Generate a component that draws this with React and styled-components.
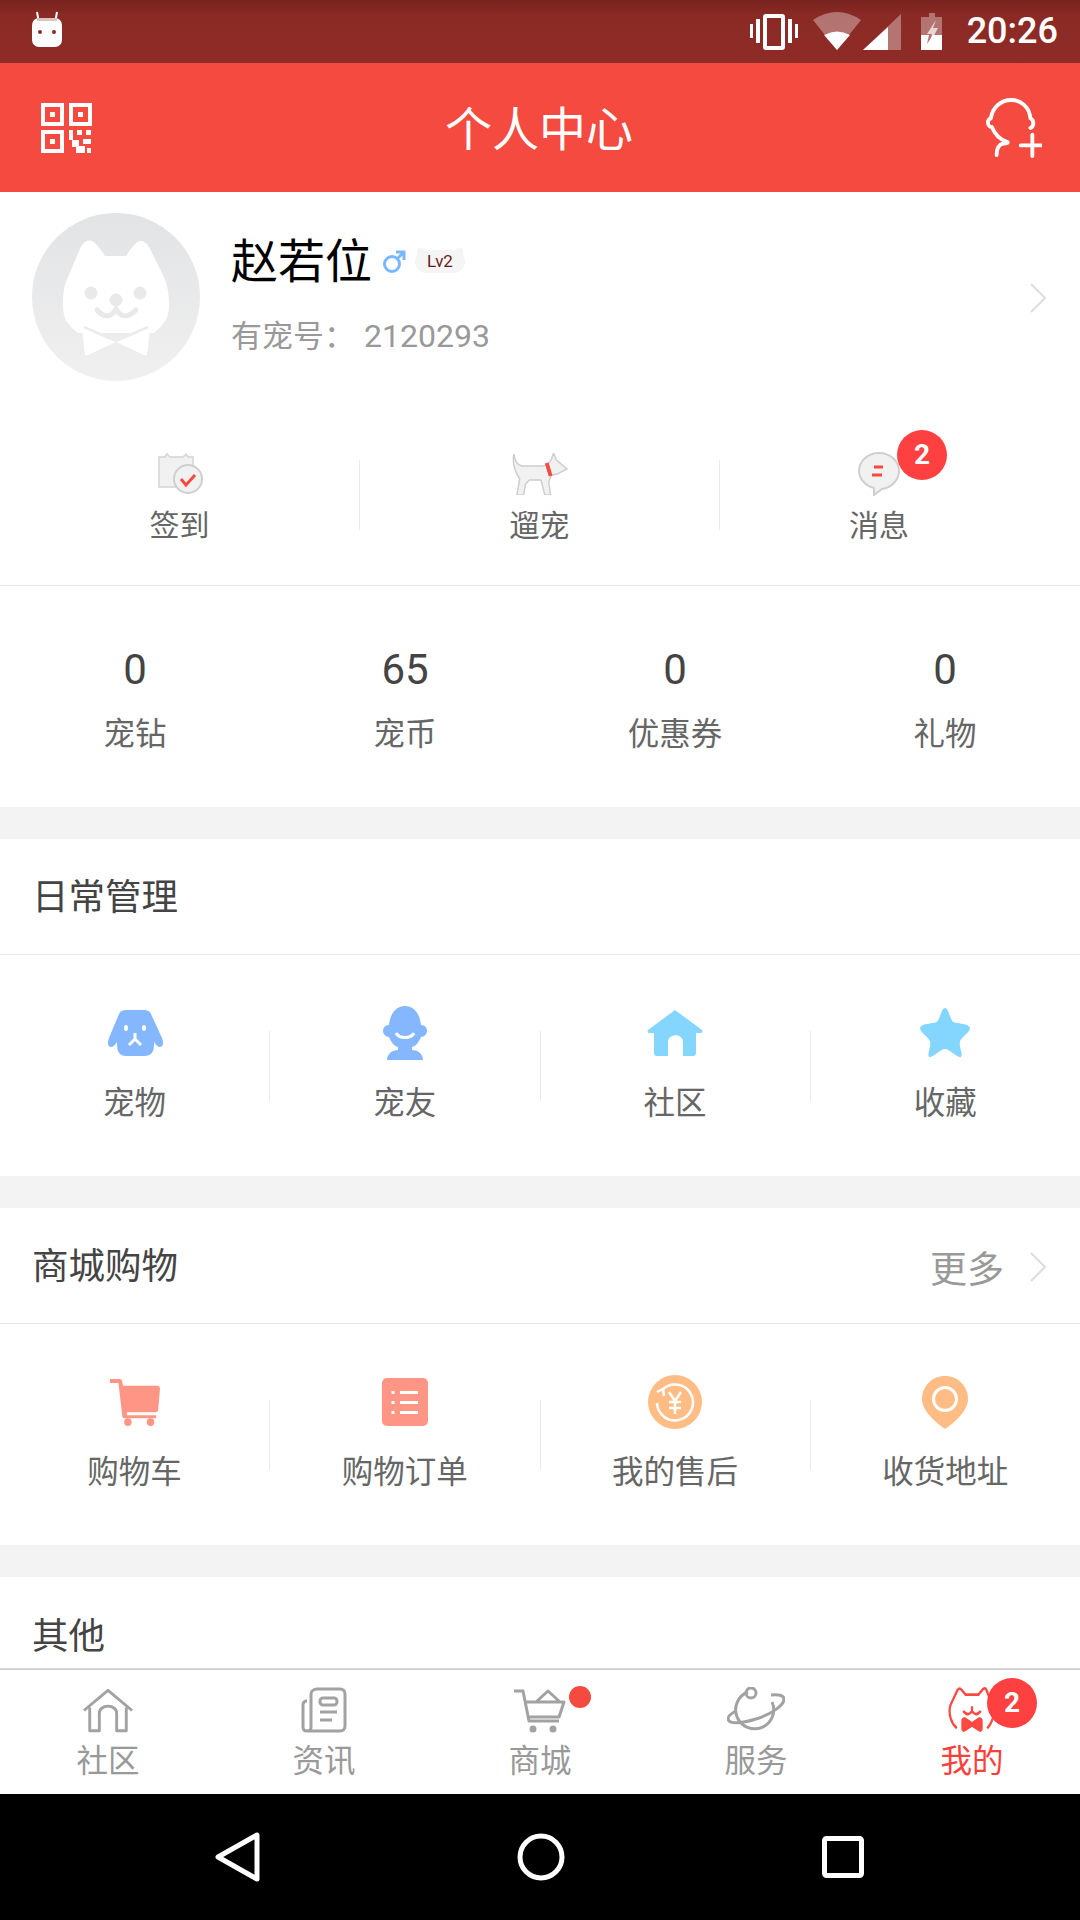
import React from "react";
import styled, { createGlobalStyle } from "styled-components";

const Global = createGlobalStyle`
  html, body { margin: 0; padding: 0; background: #fff; }
  body { font-family: Roboto, "Noto Sans CJK SC", sans-serif; }
  * { box-sizing: border-box; }
`;

const Page = styled.div`
  width: 1080px;
  height: 1920px;
  display: flex;
  flex-direction: column;
  overflow: hidden;
  background: #fff;
`;
const StatusBar = styled.div`
  height: 63px;
  flex: none;
  display: flex;
  align-items: center;
  justify-content: space-between;
  padding: 0 22px 0 30px;
  background: linear-gradient(#78231e 0, #8b2a25 16px, #8f2b27 100%);
`;
const RobotSlot = styled.div`
  display: flex;
  margin-bottom: 5px;
`;
const StatusRight = styled.div`
  display: flex;
  align-items: center;
`;
const Clock = styled.span`
  font-size: 36px;
  font-weight: 500;
  color: #fff;
  margin-left: 22px;
  line-height: 63px;
`;
const Header = styled.header`
  height: 129px;
  flex: none;
  display: flex;
  align-items: center;
  justify-content: space-between;
  background: #f44a40;
  padding: 0 38px 0 40px;
`;
const Title = styled.h1`
  margin: 0;
  padding-top: 3px;
  font-size: 47px;
  font-weight: 400;
  color: #fff;
  line-height: 1;
`;
const Content = styled.main`
  flex: 1;
  min-height: 0;
  overflow: hidden;
`;
const Profile = styled.section`
  height: 213px;
  display: flex;
  align-items: flex-start;
  padding: 21px 32px 0 32px;
`;
const Info = styled.div`
  flex: 1;
  margin-left: 31px;
  display: flex;
  flex-direction: column;
`;
const NameRow = styled.div`
  display: flex;
  align-items: center;
  height: 66px;
  margin-top: 16px;
`;
const Name = styled.span`
  font-size: 47px;
  color: #000;
  line-height: 66px;
  margin-right: 10px;
`;
const Level = styled.span`
  position: relative;
  width: 50px;
  height: 23px;
  margin-left: 9px;
  margin-bottom: 2px;
  border-radius: 12px;
  background: #f5f5f5;
  color: #6d1a1a;
  font-size: 17px;
  line-height: 23px;
  text-align: center;

  &::before,
  &::after {
    content: "";
    position: absolute;
    top: -2px;
    width: 10px;
    height: 10px;
    background: #f5f5f5;
    border-radius: 3px 6px 0 0;
  }
  &::before { left: 2px; }
  &::after { right: 2px; border-radius: 6px 3px 0 0; }
`;
const LevelText = styled.span`
  position: relative;
  z-index: 1;
`;
const PetId = styled.div`
  font-size: 32px;
  line-height: 42px;
  color: #999;
  margin-top: 20px;
`;
const PetIdLabel = styled.span`
  font-size: 31px;
  margin-right: 9px;
`;
const Chevron = styled.svg`
  flex: none;
  width: 20px;
  height: 32px;
`;
const ProfileChevron = styled(Chevron)`
  margin-top: 69px;
`;
const Row = styled.div`
  display: flex;
  align-items: center;
`;
const Actions = styled(Row)`
  height: 181px;
  border-bottom: 1px solid #e8e8e8;
  align-items: flex-start;
  padding-top: 45px;
`;
const Divider = styled.span`
  flex: none;
  width: 1px;
  height: ${(p) => p.$h || 70}px;
  background: #eaeaea;
  margin-top: ${(p) => p.$top || 0}px;
`;
const ActionCell = styled.div`
  flex: 0 0 ${(p) => p.$w}px;
  display: flex;
  flex-direction: column;
  align-items: center;
  padding-right: ${(p) => p.$shift || 0}px;
`;
const IconBox = styled.div`
  position: relative;
  height: ${(p) => p.$h || 48}px;
  display: flex;
  align-items: center;
  justify-content: center;
`;
const ActionLabel = styled.div`
  font-size: 30px;
  line-height: 42px;
  color: #666;
  margin-top: 7px;
`;
const CellLabel = styled.div`
  font-size: 31.5px;
  line-height: 42px;
  color: #666;
  margin-top: ${(p) => p.$gap || 0}px;
`;
const Badge = styled.span`
  position: absolute;
  width: 50px;
  height: 50px;
  border-radius: 50%;
  background: #ff4040;
  color: #fff;
  font-size: 28px;
  font-weight: 700;
  line-height: 50px;
  text-align: center;
  top: ${(p) => p.$top}px;
  left: ${(p) => p.$left}px;
`;
const Stats = styled(Row)`
  height: 221px;
  padding-top: 59px;
  align-items: flex-start;
`;
const Stat = styled.div`
  flex: 1;
  display: flex;
  flex-direction: column;
  align-items: center;
`;
const StatValue = styled.div`
  font-size: 42px;
  line-height: 50px;
  color: #444;
`;
const Gap = styled.div`
  height: 32px;
  background: #f3f3f3;
`;
const SectionHead = styled.div`
  height: 116px;
  border-bottom: 1px solid #e8e8e8;
  padding: 3px 32px 0 32px;
  display: flex;
  align-items: center;
  justify-content: space-between;
`;
const SectionTitle = styled.h2`
  margin: 0;
  font-size: 36.5px;
  font-weight: 400;
  color: #444;
  line-height: 1;
`;
const More = styled.div`
  display: flex;
  align-items: center;
  font-size: 37px;
  color: #999;
  gap: 24px;
`;
const Grid = styled.div`
  height: 221px;
  display: flex;
  align-items: flex-start;
  padding-top: 50px;
`;
const GridCell = styled.div`
  flex: 1;
  display: flex;
  flex-direction: column;
  align-items: center;
`;
const Clip = styled.div`
  height: 91px;
  padding: 42px 0 0 32px;
`;
const TabBar = styled.nav`
  height: 126px;
  flex: none;
  display: flex;
  border-top: 2px solid #d4d4d4;
  background: #fff;
`;
const Tab = styled.div`
  flex: 1;
  display: flex;
  flex-direction: column;
  align-items: center;
  padding-top: 16px;
`;
const TabIcon = styled.div`
  position: relative;
  width: 60px;
  height: 48px;
  display: flex;
  justify-content: center;
  align-items: center;
`;
const TabLabel = styled.div`
  font-size: 31.5px;
  line-height: 42px;
  margin-top: 7px;
  color: ${(p) => (p.$active ? "#fb3f3a" : "#999")};
`;
const Dot = styled.span`
  position: absolute;
  width: 22px;
  height: 22px;
  border-radius: 50%;
  background: #f44a40;
  left: 59px;
  top: 0;
`;
const NavBar = styled.div`
  height: 126px;
  flex: none;
  background: #000;
  display: flex;
  align-items: center;
  justify-content: center;
  padding-right: 3px;
  gap: 257px;
`;

const chevronProps = { viewBox: "0 0 20 32", fill: "none", stroke: "#dedede", strokeWidth: 2.2 };
const Arrow = () => (
  <Chevron {...chevronProps}>
    <path d="M3 2l14 14L3 30" />
  </Chevron>
);

const Robot = () => (
  <svg width="34" height="36" viewBox="0 0 34 36">
    <path d="M7 1l2 11M27 1l-2 11" stroke="#fff" strokeWidth="2" />
    <rect x="2" y="7" width="30" height="29" rx="7" fill="#fff" />
    <path d="M7 7h20v3H7z" fill="#d9c4c2" />
    <circle cx="10" cy="21" r="2" fill="#8c2a26" />
    <circle cx="24" cy="21" r="2" fill="#8c2a26" />
  </svg>
);
const StatusIcons = () => (
  <svg width="195" height="40" viewBox="0 0 195 40">
    <g fill="#fff">
      <path d="M0 12h3v14H0zM6 7h4v24H6zM38 7h4v24h-4zM45 12h3v14h-3z" />
      <path fillRule="evenodd" d="M16 2h16a3 3 0 0 1 3 3v30a3 3 0 0 1-3 3H16a3 3 0 0 1-3-3V5a3 3 0 0 1 3-3zm1 4v28h14V6z" />
      <path d="M63 8q24-16 48 0L87 38z" opacity=".35" />
      <path d="M74 23q13-7 26 0L87 38z" />
      <path d="M151 2v36h-38z" opacity=".35" />
      <path d="M138 15v23h-25z" />
      <path d="M171 5h8V1h6v4h7v33h-21z" opacity=".35" />
      <path d="M171 23h8l-2 9 6-9h9v15h-21z" />
      <path d="M186 8l-9 14h5l-2 9 8-15h-5z" opacity=".7" />
    </g>
  </svg>
);
const Qr = () => (
  <svg width="52" height="52" viewBox="0 0 52 52" fill="#fff">
    <path fillRule="evenodd" d="M1 1h23v23H1zm4 4v15h15V5zM29 1h23v23H29zm4 4v15h15V5zM1 28h23v23H1zm4 4v15h15V32z" />
    <path d="M10 10h5v5h-5zM38 10h5v5h-5zM10 37h5v5h-5zM29 28h4v10h6v6h6v7h-9v-6h-4v-7h-3zM37 28h5v5h-5zM46 28h5v5h-5zM43 37h8v5h-8zM47 46h4v5h-4z" />
  </svg>
);
const AddFriend = () => (
  <svg width="56" height="60" viewBox="0 0 58 62" fill="none" stroke="#fff" strokeWidth="4" strokeLinecap="round">
    <path d="M46 31c2-1 3-2 3-5 0-2-1-4-3-5C45 9 36 2 26 2S7 9 5 21c-2 1-3 2-3 4 0 3 2 5 4 5 3 7 9 13 15 15 3 1 1 2-3 2-4 1-7 5-7 12" strokeLinejoin="round" />
    <path d="M48 38v22M36 49h21" />
  </svg>
);
const CatFace = () => (
  <svg width="168" height="168" viewBox="0 0 168 168" aria-hidden="true">
    <defs>
      <linearGradient id="av" x1="0" y1="0" x2="0" y2="1">
        <stop offset="0" stopColor="#e2e3e5" />
        <stop offset="1" stopColor="#f0f0f0" />
      </linearGradient>
    </defs>
    <circle cx="84" cy="84" r="84" fill="url(#av)" />
    <path d="M36 64L47 38C50 30 55 26 60 28C64 30 70 38 73 43H94C97 38 103 30 107 28C112 27 117 32 120 40L131 62C136 72 137 82 137 92C137 105 132 112 122 120H46C35 112 31 105 31 92C31 80 32 72 36 64Z" fill="#fff" />
    <circle cx="59" cy="80" r="6.500" fill="#e9e9e9" />
    <circle cx="108" cy="80" r="6.500" fill="#e9e9e9" />
    <circle cx="84" cy="87" r="6.500" fill="#e9e9e9" />
    <path d="M65 97c7 8 14 8 19-1 5 9 12 9 20 1" fill="none" stroke="#e9e9e9" strokeWidth="5" strokeLinecap="round" />
    <path d="M84 129L52 116c-1 0-2 0-2 2l3 23c0 1 1 2 3 1zM84 129l32-13c1 0 2 0 2 2l-3 23c0 1-1 2-3 1z" fill="#fff" />
    <path d="M52 114l32 14 32-14" fill="none" stroke="#ececec" strokeWidth="2.500" />
  </svg>
);
const Male = () => (
  <svg width="24" height="24" viewBox="0 0 24 24" fill="none" stroke="#78b8ff" strokeWidth="3">
    <circle cx="10" cy="14" r="7.500" />
    <path d="M15 9l7-7M14 2h8v8" />
  </svg>
);
const Calendar = () => (
  <svg width="46" height="42" viewBox="0 0 46 42">
    <path d="M2 4h6l2-3 3 3h13l3-3 2 3h5v30H2z" fill="#f1f1f1" stroke="#d4d4d4" strokeWidth="1.500" />
    <circle cx="31" cy="26" r="14" fill="#f1f1f1" stroke="#cfcfcf" strokeWidth="2" />
    <path d="M24 26l5 6 9-10" fill="none" stroke="#f44a40" strokeWidth="3" />
  </svg>
);
const Dog = () => (
  <svg width="56" height="42" viewBox="0 0 58 42" preserveAspectRatio="none">
    <path d="M2 1c1 8 4 11 8 12h22c4-1 7-3 9-7l2-6 3 7 11 9-10 5-6 1-3 7 2 13h-6l-4-15H18l-4 4-2 11H5L8 26C4 20 0 10 2 1z" fill="#f1f1f1" stroke="#cdcdcd" strokeWidth="1.500" />
    <path d="M36 10l4 13" stroke="#f44a40" strokeWidth="4" />
  </svg>
);
const Bubble = () => (
  <svg width="44" height="44" viewBox="0 0 44 44">
    <path d="M22 1c11 0 20 8 20 18 0 9-8 17-17 18l-8 6v-7C9 34 2 27 2 19 2 9 11 1 22 1z" fill="#f1f1f1" stroke="#cfcfcf" strokeWidth="2" />
    <path d="M17 15h9M15 23h10" stroke="#f44a40" strokeWidth="3" />
  </svg>
);
const PetIcon = () => (
  <svg width="56" height="46" viewBox="0 0 56 46" fill="#85b7ff">
    <path d="M12 4c1-3 4-4 7-4h18c3 0 6 1 7 4l11 24c2 5 1 9-2 9-2 0-4-2-6-5 0 5 0 9-3 12-2 1-4 2-6 2H19c-3 0-5-1-7-3-2-3-2-7-2-11-2 3-4 5-6 5-3 0-4-4-2-9z" />
    <ellipse cx="19" cy="18" rx="2" ry="3" fill="#fff" />
    <ellipse cx="37" cy="18" rx="2" ry="3" fill="#fff" />
    <path d="M28 23v6M22 35l6-6 6 6" fill="none" stroke="#fff" strokeWidth="3" />
  </svg>
);
const FriendIcon = () => (
  <svg width="48" height="54" viewBox="0 0 48 54" fill="#85b7ff">
    <path d="M24 0c10 0 15 9 16 19 4 0 6 3 6 6s-3 6-6 6c-2 5-5 9-9 10v3c6 0 11 4 11 10H6c0-6 5-10 11-10v-3c-4-1-7-5-9-10-3 0-6-3-6-6s2-6 6-6C9 9 14 0 24 0z" />
    <path d="M15 27c3 6 15 6 18 0" fill="none" stroke="#fff" strokeWidth="3" />
  </svg>
);
const HouseIcon = () => (
  <svg width="56" height="46" viewBox="0 0 56 46" fill="#85d6ff">
    <path d="M28 0l27 20c1 2 0 3-2 3h-4v20c0 2-1 3-3 3H36V32c0-9-15-9-15 0v14H10c-2 0-3-1-3-3V23H3c-2 0-3-1-2-3z" />
  </svg>
);
const StarIcon = () => (
  <svg width="50" height="50" viewBox="0 0 54 50" preserveAspectRatio="none" fill="#85d6ff">
    <path d="M27 0c4 0 5 11 9 14 5 2 17 1 18 6 0 5-10 9-11 14-1 5 4 13 1 15-4 1-12-8-17-8s-13 9-17 8c-3-2 2-10 1-15C10 29 0 25 0 20c1-5 13-4 18-6 4-3 5-14 9-14z" />
  </svg>
);
const CartIcon = () => (
  <svg width="51" height="47" viewBox="0 0 54 48" preserveAspectRatio="none" fill="#ff9585">
    <path d="M1 0h10c2 0 3 1 3 3l1 4h36c2 0 3 1 3 3l-2 22c0 1-1 2-3 2H19l0 3h31v3H16c-1 0-2-1-2-3L10 4H1z" />
    <circle cx="20" cy="44" r="4" />
    <circle cx="44" cy="44" r="4" />
  </svg>
);
const ListIcon = () => (
  <svg width="46" height="48" viewBox="0 0 46 48">
    <rect width="46" height="48" rx="5" fill="#ff9585" />
    <path d="M11 13v3M11 23v3M11 33v3M18 14.500h18M18 24.500h18M18 34.500h18" stroke="#fff" strokeWidth="3" />
  </svg>
);
const RefundIcon = () => (
  <svg width="54" height="54" viewBox="0 0 54 54">
    <circle cx="27" cy="27" r="27" fill="#ffbd85" />
    <path d="M9 28a18 18 0 1 0 6-14M9 17l6-3 1 7" fill="none" stroke="#fff" strokeWidth="2.500" />
    <path d="M21 17l6 9 6-9M21 27h12M21 33h12M27 26v13" fill="none" stroke="#fff" strokeWidth="2.500" />
  </svg>
);
const PinIcon = () => (
  <svg width="46" height="53" viewBox="0 0 46 53">
    <path d="M23 0c13 0 23 10 23 23 0 12-14 24-23 30C14 47 0 35 0 23 0 10 10 0 23 0z" fill="#ffbd85" />
    <circle cx="23" cy="23" r="11.500" fill="none" stroke="#fff" strokeWidth="3" />
  </svg>
);
const TabHome = () => (
  <svg width="50" height="45" viewBox="0 0 52 46" fill="none" stroke="#a2a2a2" strokeWidth="3">
    <path d="M1 23L26 2l25 21M7 20v24h10V26c0-10 18-10 18 0v18h10V20" strokeLinejoin="round" />
  </svg>
);
const TabNews = () => (
  <svg width="46" height="46" viewBox="0 0 46 46" fill="none" stroke="#a2a2a2" strokeWidth="3">
    <path d="M10 14v26c0 3-2 4-4 4s-4-1-4-4V18c0-3 2-4 4-4M6 44h33c3 0 5-2 5-5V7c0-3-2-5-5-5H16c-3 0-6 2-6 5v7" />
    <rect x="19" y="11" width="17" height="7" rx="3" />
    <path d="M19 25h17M19 33h12" />
  </svg>
);
const TabCart = () => (
  <svg width="54" height="46" viewBox="0 0 54 46" fill="none" stroke="#a2a2a2" strokeWidth="3">
    <path d="M1 4h9l6 30h30M11 15h40l-5 15H15M23 15l12-11 12 11" strokeLinejoin="round" />
    <circle cx="20" cy="42" r="2" fill="#a2a2a2" />
    <circle cx="40" cy="42" r="2" fill="#a2a2a2" />
  </svg>
);
const TabPlanet = () => (
  <svg width="58" height="46" viewBox="0 0 58 46" fill="none" stroke="#a2a2a2" strokeWidth="3">
    <path d="M21 5a19 19 0 1 0 24 10" />
    <circle cx="24" cy="6" r="5" />
    <path d="M44 8c9-1 13 1 13 4 0 6-12 15-28 20C13 37 2 37 1 32c0-2 2-5 8-8" />
  </svg>
);
const TabCat = () => (
  <svg width="48" height="46" viewBox="0 0 60 48" preserveAspectRatio="none" fill="none" stroke="#fb4a42" strokeWidth="2.800">
    <path d="M11 43C4 38 0 28 3 19L12 3c2-2 3-2 5 0l5 5h16l6-6c2-1 3-1 4 1l8 17c2 8 0 17-7 23" />
    <path d="M30 20v4M19 25c5 5 8 4 11 0 3 4 6 5 11 0" />
    <path d="M30 38l-9-5c-2 0-3 1-3 3v7c0 2 1 3 3 2l9-5 9 5c2 1 3 0 3-2v-7c0-2-1-3-3-3z" fill="#fb4a42" />
  </svg>
);

const Back = () => (
  <svg width="46" height="50" viewBox="0 0 46 50" fill="none" stroke="#fff" strokeWidth="5">
    <path d="M43 3v44L4 25z" strokeLinejoin="round" />
  </svg>
);
const Home = () => (
  <svg width="48" height="48" viewBox="0 0 48 48" fill="none" stroke="#fff" strokeWidth="5">
    <circle cx="24" cy="24" r="21" />
  </svg>
);
const Recent = () => (
  <svg width="42" height="42" viewBox="0 0 42 42" fill="none" stroke="#fff" strokeWidth="5">
    <rect x="2.500" y="2.500" width="37" height="37" rx="2" />
  </svg>
);

const daily = [
  ["宠物", PetIcon],
  ["宠友", FriendIcon],
  ["社区", HouseIcon],
  ["收藏", StarIcon],
];
const shop = [
  ["购物车", CartIcon],
  ["购物订单", ListIcon],
  ["我的售后", RefundIcon],
  ["收货地址", PinIcon],
];
const stats = [
  ["0", "宠钻"],
  ["65", "宠币"],
  ["0", "优惠券"],
  ["0", "礼物"],
];

const IconGrid = ({ items }) => (
  <Grid>
    {items.map(([label, Icon], i) => (
      <React.Fragment key={label}>
        {i > 0 && <Divider $top={26} />}
        <GridCell>
          <IconBox $h={56}>
            <Icon />
          </IconBox>
          <CellLabel $gap={22}>{label}</CellLabel>
        </GridCell>
      </React.Fragment>
    ))}
  </Grid>
);

export default function App() {
  return (
    <Page>
      <Global />
      <StatusBar>
        <RobotSlot>
          <Robot />
        </RobotSlot>
        <StatusRight>
          <StatusIcons />
          <Clock>20:26</Clock>
        </StatusRight>
      </StatusBar>
      <Header>
        <Qr />
        <Title>个人中心</Title>
        <AddFriend />
      </Header>
      <Content>
        <Profile>
          <CatFace />
          <Info>
            <NameRow>
              <Name>赵若位</Name>
              <Male />
              <Level>
                <LevelText>Lv2</LevelText>
              </Level>
            </NameRow>
            <PetId>
              <PetIdLabel>有宠号：</PetIdLabel>
              2120293
            </PetId>
          </Info>
          <ProfileChevron {...chevronProps}>
            <path d="M3 2l14 14L3 30" />
          </ProfileChevron>
        </Profile>
        <Actions>
          <ActionCell $w={359}>
            <IconBox>
              <Calendar />
            </IconBox>
            <ActionLabel>签到</ActionLabel>
          </ActionCell>
          <Divider $top={10} />
          <ActionCell $w={359}>
            <IconBox>
              <Dog />
            </IconBox>
            <ActionLabel>遛宠</ActionLabel>
          </ActionCell>
          <Divider $top={10} />
          <ActionCell $w={360} $shift={42}>
            <IconBox>
              <Bubble />
              <Badge $top={-20} $left={40}>2</Badge>
            </IconBox>
            <ActionLabel>消息</ActionLabel>
          </ActionCell>
        </Actions>
        <Stats>
          {stats.map(([value, label]) => (
            <Stat key={label}>
              <StatValue>{value}</StatValue>
              <CellLabel $gap={19}>{label}</CellLabel>
            </Stat>
          ))}
        </Stats>
        <Gap />
        <SectionHead>
          <SectionTitle>日常管理</SectionTitle>
        </SectionHead>
        <IconGrid items={daily} />
        <Gap />
        <SectionHead>
          <SectionTitle>商城购物</SectionTitle>
          <More>
            更多
            <Arrow />
          </More>
        </SectionHead>
        <IconGrid items={shop} />
        <Gap />
        <Clip>
          <SectionTitle>其他</SectionTitle>
        </Clip>
      </Content>
      <TabBar>
        <Tab>
          <TabIcon><TabHome /></TabIcon>
          <TabLabel>社区</TabLabel>
        </Tab>
        <Tab>
          <TabIcon><TabNews /></TabIcon>
          <TabLabel>资讯</TabLabel>
        </Tab>
        <Tab>
          <TabIcon>
            <TabCart />
            <Dot />
          </TabIcon>
          <TabLabel>商城</TabLabel>
        </Tab>
        <Tab>
          <TabIcon><TabPlanet /></TabIcon>
          <TabLabel>服务</TabLabel>
        </Tab>
        <Tab>
          <TabIcon>
            <TabCat />
            <Badge $top={-8} $left={45}>2</Badge>
          </TabIcon>
          <TabLabel $active>我的</TabLabel>
        </Tab>
      </TabBar>
      <NavBar>
        <Back />
        <Home />
        <Recent />
      </NavBar>
    </Page>
  );
}
